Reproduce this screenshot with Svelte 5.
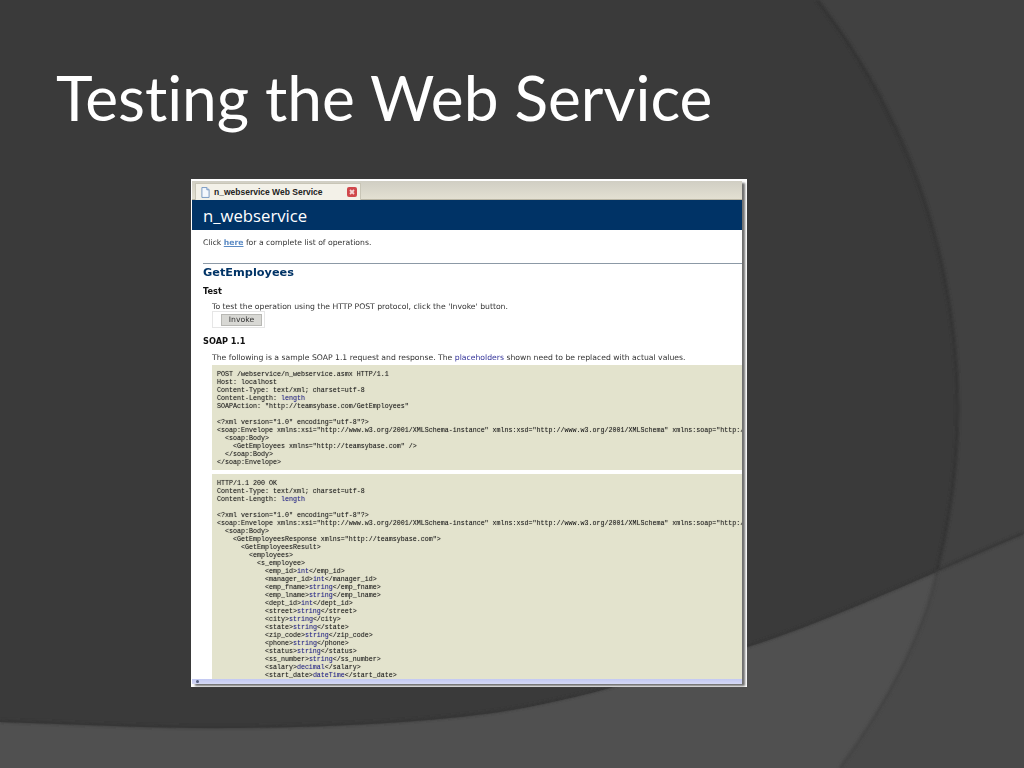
<script>
  const first = [
    ['POST /webservice/n_webservice.asmx HTTP/1.1'],
    ['Host: localhost'],
    ['Content-Type: text/xml; charset=utf-8'],
    ['Content-Length: ', 'length'],
    ['SOAPAction: "http://teamsybase.com/GetEmployees"'],
    [''],
    ['<?xml version="1.0" encoding="utf-8"?>'],
    ['<soap:Envelope xmlns:xsi="http://www.w3.org/2001/XMLSchema-instance" xmlns:xsd="http://www.w3.org/2001/XMLSchema" xmlns:soap="http://schemas.xmlsoap.org/soap/envelope/">'],
    ['  <soap:Body>'],
    ['    <GetEmployees xmlns="http://teamsybase.com" />'],
    ['  </soap:Body>'],
    ['</soap:Envelope>']
  ];

  const field = (name, type) => ['            <' + name + '>', type, '</' + name + '>'];

  const second = [
    ['HTTP/1.1 200 OK'],
    ['Content-Type: text/xml; charset=utf-8'],
    ['Content-Length: ', 'length'],
    [''],
    ['<?xml version="1.0" encoding="utf-8"?>'],
    ['<soap:Envelope xmlns:xsi="http://www.w3.org/2001/XMLSchema-instance" xmlns:xsd="http://www.w3.org/2001/XMLSchema" xmlns:soap="http://schemas.xmlsoap.org/soap/envelope/">'],
    ['  <soap:Body>'],
    ['    <GetEmployeesResponse xmlns="http://teamsybase.com">'],
    ['      <GetEmployeesResult>'],
    ['        <employees>'],
    ['          <s_employee>'],
    field('emp_id', 'int'),
    field('manager_id', 'int'),
    field('emp_fname', 'string'),
    field('emp_lname', 'string'),
    field('dept_id', 'int'),
    field('street', 'string'),
    field('city', 'string'),
    field('state', 'string'),
    field('zip_code', 'string'),
    field('phone', 'string'),
    field('status', 'string'),
    field('ss_number', 'string'),
    field('salary', 'decimal'),
    field('start_date', 'dateTime')
  ];
</script>

<div class="slide">
  <svg class="backdrop" viewBox="0 0 1024 768" aria-hidden="true">
    <defs>
      <filter id="soft" x="-5%" y="-5%" width="110%" height="110%"><feGaussianBlur stdDeviation="1.6" /></filter>
    </defs>
    <rect width="1024" height="768" fill="#3a3a3a" />
    <path d="M817 0A662 662 0 0 1 937 571L1024 534V0Z" fill="#414141" />
    <path d="M817 0A662 662 0 0 1 937 571" fill="none" stroke="#333" stroke-width="3" filter="url(#soft)" />
    <path d="M0 722C90 725 170 729 240 728C340 727 430 722 500 712C600 696 680 666 747 647C815 627 930 574 1024 534V768H0Z" fill="#505050" />
    <path d="M1024 534V768H840C890 700 925 630 937 571Z" fill="#494949" />
    <path d="M937 571C925 630 890 700 840 768" fill="none" stroke="#434343" stroke-width="3" filter="url(#soft)" />
    <path d="M0 721C90 724 170 728 240 727C340 726 430 721 500 711C600 695 680 665 747 646C815 626 930 573 1024 533" fill="none" stroke="#333" stroke-width="2" filter="url(#soft)" />
  </svg>

  <h1>Testing the Web Service</h1>

  <div class="shot">
    <div class="frame">
      <div class="tabs">
        <div class="tab">
          <svg class="page-icon" viewBox="0 0 10 12" aria-hidden="true">
            <path d="M1 .5H6.500L9 3V11.500H1Z" fill="#f4f8fd" stroke="#6f93bf" />
            <path d="M6.500 .5V3H9" fill="#cfe0f2" stroke="#6f93bf" />
          </svg>
          <span>n_webservice Web Service</span>
          <svg class="close-icon" viewBox="0 0 10 10" aria-hidden="true">
            <rect width="10" height="10" rx="2" fill="#d0484c" />
            <path d="M3 3L7 7M7 3L3 7" stroke="#f3d4d4" stroke-width="1.800" />
          </svg>
        </div>
      </div>
      <div class="banner">n_webservice</div>

      <div class="page">
        <p class="click">Click <a href="#top">here</a> for a complete list of operations.</p>
        <h2>GetEmployees</h2>
        <h3 class="test-head">Test</h3>
        <p class="indent">To test the operation using the HTTP POST protocol, click the 'Invoke' button.</p>
        <div class="invoke-box"><button type="button">Invoke</button></div>
        <h3 class="soap-head">SOAP 1.1</h3>
        <p class="indent">The following is a sample SOAP 1.1 request and response. The <span class="hint">placeholders</span> shown need to be replaced with actual values.</p>

        <pre class="code first">{#each first as line}<span class="row">{line[0]}{#if line[1]}<b>{line[1]}</b>{/if}{line[2] ?? ''}{'\n'}</span>{/each}</pre>
        <pre class="code second">{#each second as line}<span class="row">{line[0]}{#if line[1]}<b>{line[1]}</b>{/if}{line[2] ?? ''}{'\n'}</span>{/each}</pre>
      </div>

      <div class="scrollbar"><span class="arrow"></span></div>
    </div>
  </div>
</div>

<style>
  :global(body) {
    background: #3a3a3a;
  }
  .slide {
    position: relative;
    width: 1024px;
    height: 768px;
    overflow: hidden;
    box-sizing: border-box;
    padding: 59px 0 0 56px;
  }
  .backdrop {
    position: absolute;
    left: 0;
    top: 0;
    width: 1024px;
    height: 768px;
  }
  h1 {
    position: relative;
    margin: 0;
    height: 120px;
    font: 400 62.200px/76px Lato, "Open Sans", sans-serif;
    font-variant-ligatures: none;
    color: #fff;
    white-space: nowrap;
  }
  .shot {
    position: relative;
    box-sizing: border-box;
    width: 556px;
    height: 508px;
    margin-left: 135px;
    padding: 2px 5px 3px 1px;
    background: #fff;
  }
  .frame {
    display: flex;
    flex-direction: column;
    height: 100%;
    background: #fff;
    box-shadow: 3px 2px 2px #707070;
    filter: blur(0.4px);
  }
  .tabs {
    flex: none;
    box-sizing: border-box;
    height: 19px;
    padding: 2px 0 0 3px;
    background: linear-gradient(#d0cec3, #e3e0d2);
    border-bottom: 1px solid #b9b5a4;
  }
  .tab {
    display: flex;
    align-items: center;
    box-sizing: border-box;
    width: 166px;
    height: 17px;
    padding: 0 3px 0 5px;
    background: #f3f1e8;
    border: 1px solid #c8c5b6;
    border-bottom: none;
    font: 700 8.500px/12px "Liberation Sans", sans-serif;
    color: #222;
  }
  .tab span {
    flex: 1;
    margin-left: 4px;
    white-space: nowrap;
  }
  .page-icon {
    width: 9px;
    height: 11px;
  }
  .close-icon {
    width: 10px;
    height: 10px;
  }
  .banner {
    flex: none;
    height: 30px;
    padding-left: 11px;
    background: #003366;
    font: 400 16.700px/32px "Open Sans", sans-serif;
    color: #fff;
  }
  .page {
    flex: 1;
    min-height: 0;
    overflow: hidden;
    padding-left: 11px;
    font-family: "DejaVu Sans", sans-serif;
    color: #333;
  }
  p {
    margin: 0;
    font-size: 7.700px;
    line-height: 12px;
    white-space: nowrap;
  }
  .click {
    padding-top: 7px;
    height: 26px;
  }
  a {
    font-weight: 700;
    color: #5b8ac4;
  }
  h2 {
    margin: 0;
    box-sizing: border-box;
    height: 19px;
    border-top: 1px solid #8c99a6;
    font-size: 11.300px;
    line-height: 17px;
    font-weight: 700;
    color: #003366;
  }
  h3 {
    margin: 0;
    font-size: 8.200px;
    line-height: 12px;
    font-weight: 700;
    color: #111;
  }
  .test-head {
    padding-top: 3px;
    padding-bottom: 4px;
  }
  .indent {
    padding-left: 9px;
  }
  .invoke-box {
    display: flex;
    align-items: center;
    box-sizing: border-box;
    width: 53px;
    height: 17px;
    margin: -2px 0 0 9px;
    padding-left: 8px;
    border: 1px solid #e6e6e6;
  }
  button {
    box-sizing: border-box;
    width: 41px;
    height: 12px;
    padding: 0;
    background: #d8d8d4;
    border: 1px solid #b8b8b4;
    font: 400 7.700px/10px "DejaVu Sans", sans-serif;
    color: #333;
  }
  .soap-head {
    padding-top: 7px;
    padding-bottom: 5px;
  }
  .hint {
    color: #333399;
  }
  .code {
    margin: 0 0 0 9px;
    padding: 5px 0 0 5px;
    background: #e3e3cd;
    font: 400 6.670px/8px "Liberation Mono", monospace;
    color: #222;
    text-shadow: 0 0 1px rgba(50, 50, 40, 0.4);
    overflow: hidden;
  }
  .first {
    height: 100px;
    margin-top: 1px;
    margin-bottom: 4px;
  }
  .second {
    height: 205px;
  }
  .row {
    display: block;
    height: 8px;
    white-space: pre;
  }
  .code b {
    font-weight: 400;
    color: #2b2b96;
  }
  .scrollbar {
    flex: none;
    position: relative;
    height: 5px;
    background: linear-gradient(#c3c9f2, #d5d9f5);
  }
  .arrow {
    position: absolute;
    left: 4px;
    top: 1px;
    width: 3px;
    height: 3px;
    background: #56607f;
    border-radius: 50%;
  }
</style>
